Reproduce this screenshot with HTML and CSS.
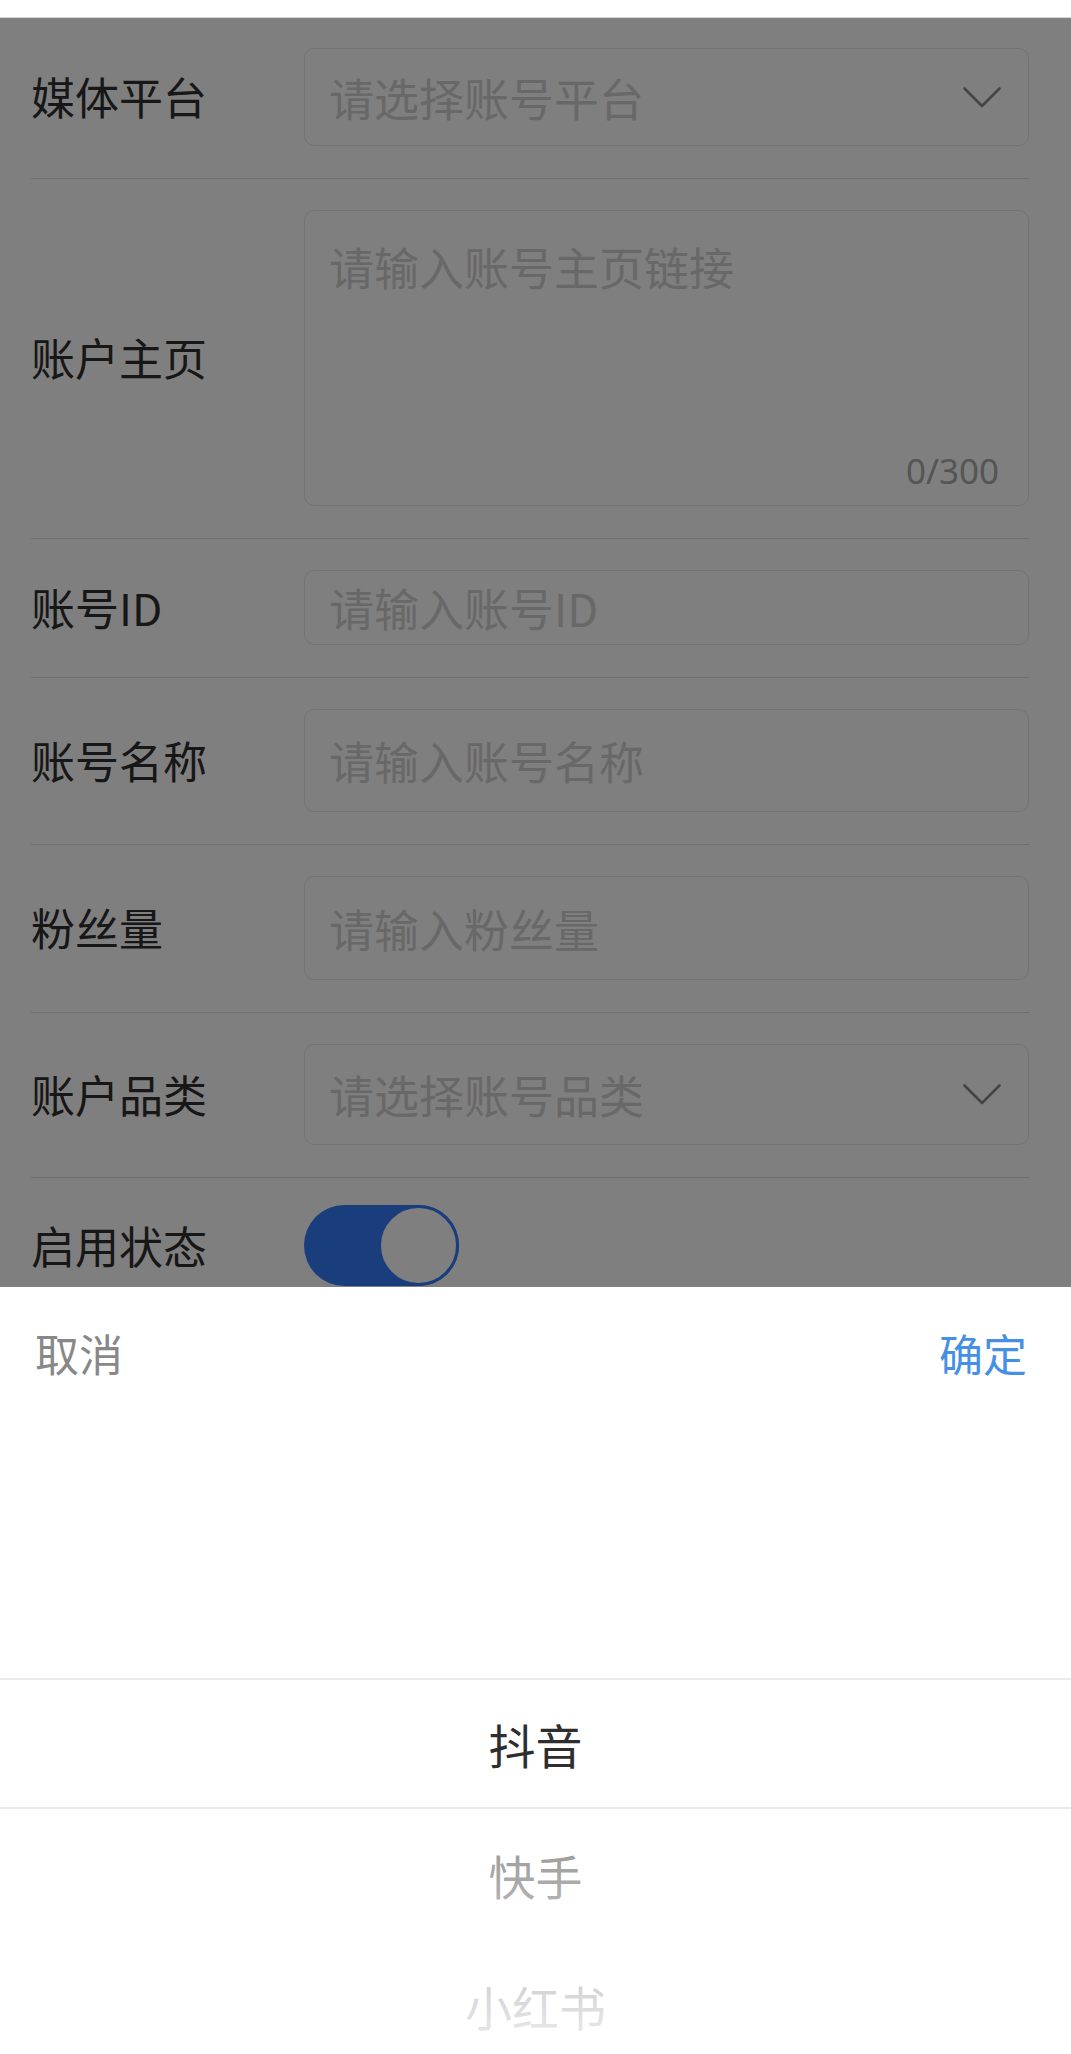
FILE: index.html
```html
<!DOCTYPE html>
<html lang="zh-CN">
<head>
<meta charset="utf-8">
<title>添加账号</title>
<link rel="stylesheet" href="styles.css">
</head>
<body>
<div class="topbar"></div>
<form class="form">
  <div class="row row--first">
    <div class="label">媒体平台</div>
    <div class="field field--select field--h98">
      <span class="ph">请选择账号平台</span>
      <svg class="chev" width="38" height="21" viewBox="0 0 38 21"><path d="M1.5 1.5 L19 19 L36.5 1.5" fill="none" stroke="#888" stroke-width="2.6" stroke-linecap="round" stroke-linejoin="round"/></svg>
    </div>
  </div>
  <div class="row">
    <div class="label">账户主页</div>
    <div class="field field--area">
      <span class="ph">请输入账号主页链接</span>
      <span class="counter">0/300</span>
    </div>
  </div>
  <div class="row">
    <div class="label">账号ID</div>
    <div class="field field--h75"><span class="ph">请输入账号ID</span></div>
  </div>
  <div class="row">
    <div class="label">账号名称</div>
    <div class="field field--h103"><span class="ph">请输入账号名称</span></div>
  </div>
  <div class="row">
    <div class="label">粉丝量</div>
    <div class="field field--h104"><span class="ph">请输入粉丝量</span></div>
  </div>
  <div class="row">
    <div class="label">账户品类</div>
    <div class="field field--select field--h101">
      <span class="ph">请选择账号品类</span>
      <svg class="chev" width="38" height="21" viewBox="0 0 38 21"><path d="M1.5 1.5 L19 19 L36.5 1.5" fill="none" stroke="#888" stroke-width="2.6" stroke-linecap="round" stroke-linejoin="round"/></svg>
    </div>
  </div>
  <div class="row row--switch">
    <div class="label">启用状态</div>
    <div class="switch"><div class="knob"></div></div>
  </div>
</form>
<div class="mask"></div>
<div class="sheet">
  <div class="sheet-head">
    <span class="cancel">取消</span>
    <span class="confirm">确定</span>
  </div>
  <div class="picker">
    <ul class="picker-list">
      <li class="picker-item picker-item--active">抖音</li>
      <li class="picker-item">快手</li>
      <li class="picker-item">小红书</li>
    </ul>
    <div class="picker-mask picker-mask--top"></div>
    <div class="picker-frame"></div>
    <div class="picker-mask picker-mask--bottom"></div>
  </div>
</div>
</body>
</html>
```
FILE: styles.css
```css
html, body {
  margin: 0;
  padding: 0;
  background: #fff;
  height: 100%;
  overflow: hidden;
}
body {
  font-family: "Noto Sans CJK SC", "Noto Sans", sans-serif;
  color: #333;
}
.topbar {
  height: 17px;
  border-bottom: 1px solid #d6d6d6;
  background: #fff;
}
.form {
  margin: 0 42px 0 31px;
}
.row {
  display: flex;
  align-items: center;
  padding: 31px 0 32px;
  border-bottom: 1px solid #dcdcdc;
}
.row--first {
  padding-top: 30px;
}
.row--switch {
  padding-top: 27px;
  border-bottom: none;
}
.label {
  flex: none;
  width: 273px;
  font-size: 44px;
  line-height: 1.4;
  color: #2e2e2e;
}
.field {
  flex: 1;
  position: relative;
  box-sizing: border-box;
  display: flex;
  align-items: center;
  justify-content: space-between;
  border: 1px solid #e6e6e6;
  border-radius: 10px;
  background: #fff;
  padding: 0 27px 0 24px;
}
.field--h98 { height: 98px; }
.field--h75 { height: 75px; }
.field--h103 { height: 103px; }
.field--h104 { height: 104px; }
.field--h101 { height: 101px; }
.field--area {
  height: 296px;
  align-items: flex-start;
  padding-top: 24px;
}
.ph {
  font-size: 45px;
  line-height: 1.4;
  color: #d0d0d0;
}
.chev {
  flex: none;
  display: block;
}
.counter {
  position: absolute;
  right: 29px;
  bottom: 12px;
  font-family: "Noto Sans", sans-serif;
  font-size: 35px;
  line-height: 1.3;
  color: #aaa;
}
.switch {
  width: 155px;
  height: 81px;
  border-radius: 41px;
  background: #347af8;
  display: flex;
  justify-content: flex-end;
}
.knob {
  width: 81px;
  height: 81px;
  box-sizing: border-box;
  border-radius: 50%;
  border: 3px solid #347af8;
  background: #fff;
}
.mask {
  position: fixed;
  top: 18px;
  left: 0;
  right: 0;
  bottom: 0;
  background: rgba(0, 0, 0, 0.5);
}
.sheet {
  position: fixed;
  left: 0;
  right: 0;
  bottom: 0;
  height: 767px;
  background: #fff;
  overflow: hidden;
}
.sheet-head {
  height: 131px;
  display: flex;
  align-items: center;
  justify-content: space-between;
  padding: 0 44px 0 35px;
  font-size: 44px;
}
.cancel { color: #888; }
.confirm { color: #4590e6; }
.picker {
  position: relative;
  height: 655px;
}
.picker-list {
  list-style: none;
  margin: 0;
  padding: 260px 0 0;
}
.picker-item {
  height: 131px;
  display: flex;
  align-items: center;
  justify-content: center;
  font-size: 47px;
  color: #2e2e2e;
}
.picker-mask {
  position: absolute;
  left: 0;
  right: 0;
}
.picker-mask--top {
  top: 0;
  height: 260px;
  background: linear-gradient(to bottom, rgba(255,255,255,0.96), rgba(255,255,255,0.45));
}
.picker-mask--bottom {
  top: 391px;
  bottom: 0;
  background: linear-gradient(to bottom, rgba(255,255,255,0.45), rgba(255,255,255,0.96));
}
.picker-frame {
  position: absolute;
  left: 0;
  right: 0;
  top: 260px;
  height: 131px;
  box-sizing: border-box;
  border-top: 2px solid #ebebeb;
  border-bottom: 2px solid #ebebeb;
}
```
